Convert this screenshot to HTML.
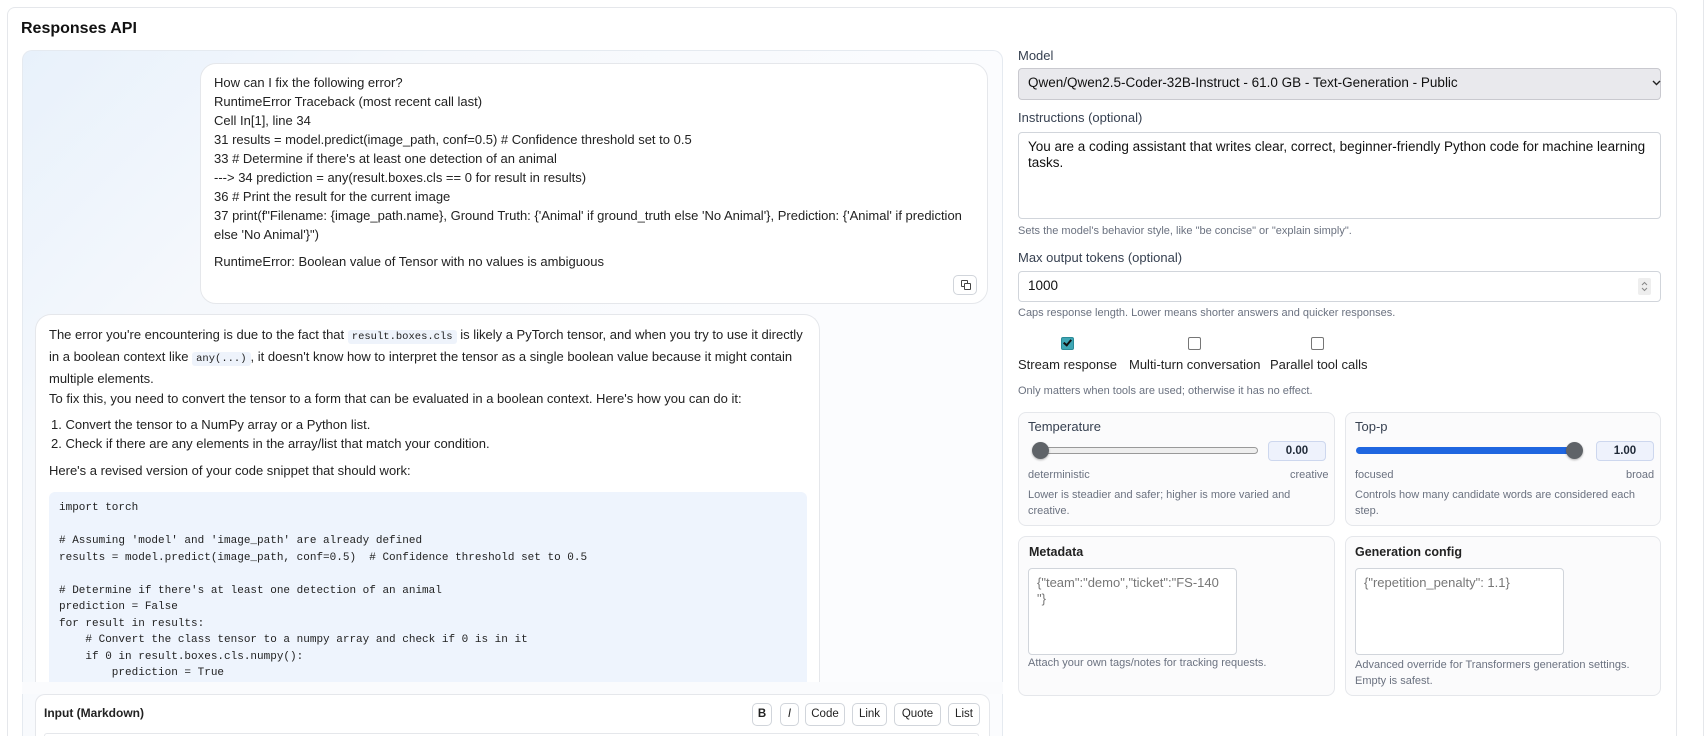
<!DOCTYPE html>
<html><head><meta charset="utf-8"><style>
*{box-sizing:border-box;margin:0;padding:0}
html,body{width:1708px;height:736px;overflow:hidden}
body{background:#fff;font-family:"Liberation Sans",sans-serif;color:#1f2937}
#w{position:relative;width:1708px;height:736px;overflow:hidden}
.a{position:absolute;white-space:nowrap}
.card{position:absolute;left:7px;top:7px;width:1670px;height:729px;border:1px solid #e5e7eb;border-bottom:none;border-radius:8px 8px 0 0}
.chat{position:absolute;left:22px;top:50px;width:981px;height:686px;border-radius:10px 10px 0 0;border:1px solid #e5eaf0;border-bottom:none;background:linear-gradient(135deg,#e8f1fb 0%,#f5f8fc 25%,#fbfcfe 60%)}
.ub{position:absolute;left:200px;top:63px;width:788px;height:241px;background:#fff;border:1px solid #e5e7eb;border-radius:16px}
.ab{position:absolute;left:35px;top:314px;width:785px;height:380px;background:#fff;border:1px solid #e5e7eb;border-bottom:none;border-radius:16px 16px 0 0}
.t{font-size:13px;color:#222;line-height:19px}
.code{position:absolute;left:49px;top:492px;width:758px;height:190px;background:#eef4fd;border-radius:6px 6px 0 0}
.mono{font-family:"Liberation Mono",monospace;font-size:11px;color:#222}
.ic{font-family:"Liberation Mono",monospace;font-size:10.5px;background:#eef3fb;border-radius:3px;padding:1px 4px}
.inp{position:absolute;left:35px;top:694px;width:955px;height:42px;background:#fff;border:1px solid #e5e7eb;border-bottom:none;border-radius:10px 10px 0 0}
.btn{position:absolute;top:703px;height:23px;border:1px solid #d1d5db;border-radius:5px;background:#fff;font-size:11.5px;text-align:center;line-height:21px;color:#222}
.lbl{font-size:13px;color:#374151}
.hint{font-size:11px;color:#6b7280}
.box{position:absolute;border:1px solid #d1d5db;border-radius:4px;background:#fff}
.pc{position:absolute;border:1px solid #e5e7eb;border-radius:8px;background:#fbfbfc}
.cb{position:absolute;top:337px;width:13px;height:13px;border:1px solid #767676;border-radius:2px;background:#fff}
.val{position:absolute;top:441px;width:58px;height:20px;background:#eef2fc;border:1px solid #cdd7ee;border-radius:4px;font-size:11.5px;font-weight:bold;text-align:center;line-height:18px}
.thumb{position:absolute;width:17px;height:17px;border-radius:50%;background:#5f6368;box-shadow:0 1px 2px rgba(0,0,0,.3)}
</style></head><body><div id="w">
<div class="card"></div>
<div class="a" style="left:21px;top:20px;font-size:16px;font-weight:bold;color:#111">Responses API</div>
<div class="chat"></div>
<div class="ub"></div>
<div class="a t" style="left:214px;top:73px">How can I fix the following error?<br>RuntimeError Traceback (most recent call last)<br>Cell In[1], line 34<br>31 results = model.predict(image_path, conf=0.5) # Confidence threshold set to 0.5<br>33 # Determine if there's at least one detection of an animal<br>---&gt; 34 prediction = any(result.boxes.cls == 0 for result in results)<br>36 # Print the result for the current image<br>37 print(f"Filename: {image_path.name}, Ground Truth: {'Animal' if ground_truth else 'No Animal'}, Prediction: {'Animal' if prediction<br>else 'No Animal'}")</div>
<div class="a t" style="left:214px;top:252px">RuntimeError: Boolean value of Tensor with no values is ambiguous</div>
<div style="position:absolute;left:953px;top:275px;width:24px;height:20px;border:1px solid #d1d5db;border-radius:5px;background:#fff"><div style="position:absolute;left:7px;top:4px;width:7px;height:7px;border:1.2px solid #444;border-radius:1px"></div><div style="position:absolute;left:10px;top:7px;width:7px;height:7px;border:1.2px solid #444;border-radius:1px;background:#fff"></div></div>
<div class="ab"></div>
<div class="a t" style="left:49px;top:325px">The error you're encountering is due to the fact that <span class="ic">result.boxes.cls</span> is likely a PyTorch tensor, and when you try to use it directly<br>in a boolean context like <span class="ic">any(...)</span>, it doesn't know how to interpret the tensor as a single boolean value because it might contain<br>multiple elements.</div>
<div class="a t" style="left:49px;top:389px">To fix this, you need to convert the tensor to a form that can be evaluated in a boolean context. Here's how you can do it:</div>
<div class="a t" style="left:51px;top:415px">1. Convert the tensor to a NumPy array or a Python list.<br>2. Check if there are any elements in the array/list that match your condition.</div>
<div class="a t" style="left:49px;top:461px">Here's a revised version of your code snippet that should work:</div>
<div class="code"></div>
<pre class="mono" style="position:absolute;white-space:pre;left:59px;top:500px;line-height:16.5px">import torch

# Assuming 'model' and 'image_path' are already defined
results = model.predict(image_path, conf=0.5)  # Confidence threshold set to 0.5

# Determine if there's at least one detection of an animal
prediction = False
for result in results:
    # Convert the class tensor to a numpy array and check if 0 is in it
    if 0 in result.boxes.cls.numpy():
        prediction = True</pre>
<div style="position:absolute;left:22px;top:682px;width:981px;height:12px;background:#fafbfd"></div>
<div class="inp"></div>
<div class="a" style="left:44px;top:706px;font-size:12px;font-weight:bold;color:#222">Input (Markdown)</div>
<div style="position:absolute;left:44px;top:733px;width:935px;height:3px;border:1px solid #e5e7eb;border-bottom:none;border-radius:6px 6px 0 0"></div>
<div class="btn" style="left:752px;width:20px;font-weight:bold">B</div>
<div class="btn" style="left:780px;width:19px;font-style:italic">I</div>
<div class="btn" style="left:805px;width:40px">Code</div>
<div class="btn" style="left:852px;width:35px">Link</div>
<div class="btn" style="left:894px;width:47px">Quote</div>
<div class="btn" style="left:948px;width:32px">List</div>

<div class="a lbl" style="left:1018px;top:48px">Model</div>
<div class="box" style="left:1018px;top:68px;width:643px;height:32px;background:#e9e9ed;border-color:#c9c9cf"></div>
<div class="a" style="left:1028px;top:75px;font-size:13.5px;color:#111">Qwen/Qwen2.5-Coder-32B-Instruct - 61.0 GB - Text-Generation - Public</div>
<svg style="position:absolute;left:1652px;top:80px" width="9" height="6" viewBox="0 0 9 6"><path d="M1 1 L4.5 4.5 L8 1" fill="none" stroke="#222" stroke-width="1.4"/></svg>
<div class="a lbl" style="left:1018px;top:110px">Instructions (optional)</div>
<div class="box" style="left:1018px;top:132px;width:643px;height:87px"></div>
<div class="a" style="left:1028px;top:139px;font-size:13.5px;color:#111;line-height:16px">You are a coding assistant that writes clear, correct, beginner-friendly Python code for machine learning<br>tasks.</div>
<div class="a hint" style="left:1018px;top:225px">Sets the model's behavior style, like "be concise" or "explain simply".</div>
<div class="a lbl" style="left:1018px;top:250px">Max output tokens (optional)</div>
<div class="box" style="left:1018px;top:271px;width:643px;height:31px"></div>
<div class="a" style="left:1028px;top:278px;font-size:13.5px;color:#111">1000</div>
<svg style="position:absolute;left:1638px;top:278px" width="13" height="17" viewBox="0 0 13 17"><rect width="13" height="17" rx="2" fill="#eee"/><path d="M4 7 L6.5 4.5 L9 7 M4 10 L6.5 12.5 L9 10" fill="none" stroke="#888" stroke-width="1"/></svg>
<div class="a hint" style="left:1018px;top:307px">Caps response length. Lower means shorter answers and quicker responses.</div>
<div class="cb" style="left:1061px;background:#3fa7b5;border-color:#2b8b98"><div style="position:absolute;left:3px;top:0px;width:5px;height:8px;border-right:2px solid #111;border-bottom:2px solid #111;transform:rotate(40deg)"></div></div>
<div class="cb" style="left:1188px"></div>
<div class="cb" style="left:1311px"></div>
<div class="a lbl" style="left:1018px;top:357px;color:#222">Stream response</div>
<div class="a lbl" style="left:1129px;top:357px;color:#222">Multi-turn conversation</div>
<div class="a lbl" style="left:1270px;top:357px;color:#222">Parallel tool calls</div>
<div class="a hint" style="left:1018px;top:385px">Only matters when tools are used; otherwise it has no effect.</div>

<div class="pc" style="left:1018px;top:412px;width:317px;height:114px"></div>
<div class="pc" style="left:1345px;top:412px;width:316px;height:114px"></div>
<div class="a lbl" style="left:1028px;top:419px">Temperature</div>
<div style="position:absolute;left:1038px;top:447px;width:220px;height:7px;border:1px solid #999;border-radius:4px;background:#eee"></div>
<div class="thumb" style="left:1032px;top:442px"></div>
<div class="val" style="left:1268px">0.00</div>
<div class="a hint" style="left:1028px;top:469px">deterministic</div>
<div class="a hint" style="left:1290px;top:469px">creative</div>
<div class="a hint" style="left:1028px;top:487px;line-height:16px">Lower is steadier and safer; higher is more varied and<br>creative.</div>
<div class="a lbl" style="left:1355px;top:419px">Top-p</div>
<div style="position:absolute;left:1356px;top:447px;width:220px;height:7px;border-radius:4px;background:#1f66e0"></div>
<div class="thumb" style="left:1566px;top:442px"></div>
<div class="val" style="left:1596px">1.00</div>
<div class="a hint" style="left:1355px;top:469px">focused</div>
<div class="a hint" style="left:1626px;top:469px">broad</div>
<div class="a hint" style="left:1355px;top:487px;line-height:16px">Controls how many candidate words are considered each<br>step.</div>

<div class="pc" style="left:1018px;top:536px;width:317px;height:160px"></div>
<div class="pc" style="left:1345px;top:536px;width:316px;height:160px"></div>
<div class="a" style="left:1029px;top:545px;font-size:12.5px;font-weight:bold;color:#222">Metadata</div>
<div class="box" style="left:1028px;top:568px;width:209px;height:87px"></div>
<div class="a" style="left:1037px;top:575px;font-size:13px;color:#777;line-height:16px">{"team":"demo","ticket":"FS-140<br>"}</div>
<div class="a hint" style="left:1028px;top:657px">Attach your own tags/notes for tracking requests.</div>
<div class="a" style="left:1355px;top:545px;font-size:12.5px;font-weight:bold;color:#222">Generation config</div>
<div class="box" style="left:1355px;top:568px;width:209px;height:87px"></div>
<div class="a" style="left:1364px;top:575px;font-size:13px;color:#777">{"repetition_penalty": 1.1}</div>
<div class="a hint" style="left:1355px;top:657px;line-height:16px">Advanced override for Transformers generation settings.<br>Empty is safest.</div>
<div style="position:absolute;left:1703px;top:0;width:1px;height:736px;background:#e5e7eb"></div>
</div></body></html>
